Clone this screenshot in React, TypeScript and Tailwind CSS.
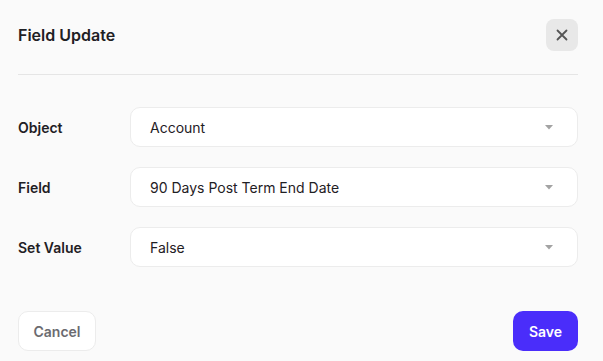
import React from "react";

function Caret() {
  return (
    <svg width="10" height="6" viewBox="0 0 10 6" className="shrink-0">
      <path d="M1 1h8L5 5.5z" fill="#a3a3a3" />
    </svg>
  );
}

function SelectRow({ label, value }: { label: string; value: string }) {
  return (
    <div className="flex items-center">
      <div className="w-[112px] text-[14px] font-semibold text-[#1f2024]">{label}</div>
      <div className="flex h-[40px] flex-1 items-center justify-between rounded-[10px] border border-[#ececec] bg-white pl-[19px] pr-[23px]">
        <span className="text-[14px] text-[#1f2024]">{value}</span>
        <Caret />
      </div>
    </div>
  );
}

export default function App() {
  return (
    <div
      className="h-[361px] w-[603px] bg-[#fafafa] pl-[18px] pr-[25px]"
      style={{ fontFamily: "Inter, 'Liberation Sans', sans-serif" }}
    >
      <div className="flex h-[75px] items-center justify-between border-b border-[#e5e5e5] pb-[5px]">
        <h1 className="text-[16px] font-semibold text-[#1f2024]">Field Update</h1>
        <button className="flex h-[32px] w-[32px] items-center justify-center rounded-[8px] bg-[#e8e8e8]">
          <svg width="12" height="12" viewBox="0 0 12 12">
            <path d="M1.5 1.5l9 9M10.5 1.5l-9 9" stroke="#555" strokeWidth="1.8" strokeLinecap="round" />
          </svg>
        </button>
      </div>
      <div className="flex flex-col gap-[20px] pt-[32px]">
        <SelectRow label="Object" value="Account" />
        <SelectRow label="Field" value="90 Days Post Term End Date" />
        <SelectRow label="Set Value" value="False" />
      </div>
      <div className="flex items-center justify-between pt-[44px]">
        <button className="h-[40px] w-[78px] rounded-[10px] border border-[#ececec] bg-white text-[14px] font-semibold text-[#6b6b70]">
          Cancel
        </button>
        <button className="h-[40px] w-[65px] rounded-[10px] bg-[#4a2dfa] text-[14px] font-semibold text-white">
          Save
        </button>
      </div>
    </div>
  );
}
